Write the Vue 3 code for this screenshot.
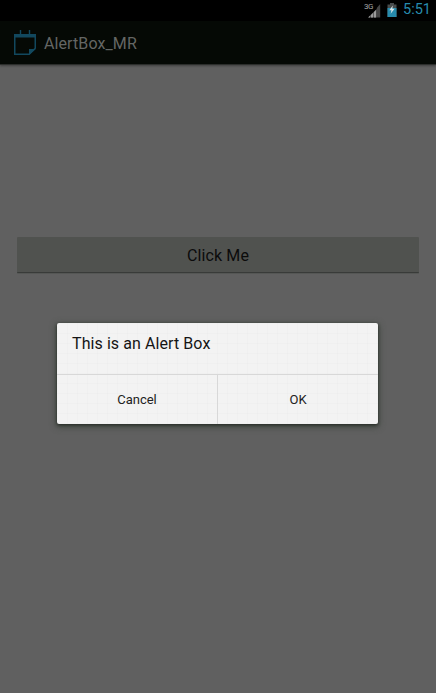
<script setup>
const actions = ['Cancel', 'OK']
</script>

<template>
  <div class="screen">
    <header class="status">
      <svg class="signal" width="17" height="16" viewBox="0 0 17 16">
        <text x="0" y="7" class="network">3G</text>
        <path d="M4 15.5 12.8 7v8.5z" fill="#5c5c5c" />
        <path d="M4.5 15.5h1.5v-1.8l-1.5 1.5zM7 15.5h2v-4.6l-2 2zM10 15.5h2V8l-2 2z" fill="#9a9a9a" />
        <path d="M12.8 15.5h3.4V2l-3.4 4z" fill="#454545" />
      </svg>
      <svg class="battery" width="10" height="14" viewBox="0 0 10 14">
        <path d="M3 0h4v1.5h2.5V14H.5V1.5H3z" fill="#484c4d" />
        <path d="M.5 5h9v9h-9z" fill="#278bad" />
        <path d="M5.8 2.5 2.3 7.3h2.2l-.9 3.5 4-5H5.3z" fill="#d8e5e8" />
      </svg>
      <span class="clock">5:51</span>
    </header>
    <div class="bar">
      <svg class="logo" width="22" height="26" viewBox="0 0 22 26">
        <path d="M6.5 0v5M15.5 0v5" stroke="#12485e" stroke-width="1.4" />
        <path d="M0 4h22v3.5H0z" fill="#12485e" />
        <path d="M.75 7v17.25h14.5l6-6V7" fill="none" stroke="#12485e" stroke-width="1.5" />
        <path d="M15 25v-6h6.8z" fill="#12485e" />
      </svg>
      <span class="title">AlertBox_MR</span>
    </div>
    <main class="content">
      <button class="main-button">Click Me</button>
      <section class="dialog" role="dialog">
        <p class="message">This is an Alert Box</p>
        <div class="actions">
          <button v-for="label in actions" :key="label" class="action">{{ label }}</button>
        </div>
      </section>
    </main>
  </div>
</template>

<style>
body {
  margin: 0;
  background: #5f5f5f;
}
</style>

<style scoped>
.screen {
  width: 436px;
  height: 693px;
  display: flex;
  flex-direction: column;
  overflow: hidden;
  background-color: #606060;
  font-family: Roboto, sans-serif;
}
button {
  font-family: inherit;
  border: 0;
  padding: 0;
  margin: 0;
}
.status {
  height: 21px;
  flex: none;
  box-sizing: border-box;
  padding: 0 6px 2px 0;
  display: flex;
  justify-content: flex-end;
  align-items: center;
  background: #000;
}
.signal {
  margin-right: 1px;
  overflow: visible;
}
.network {
  font-size: 8px;
  letter-spacing: -0.5px;
  fill: #a5a5a5;
}
.battery {
  margin: 0 6px 0 5px;
}
.clock {
  color: #278bad;
  font-size: 14.5px;
  line-height: 19px;
  width: 27px;
}
.bar {
  height: 44px;
  flex: none;
  box-sizing: border-box;
  padding-left: 14px;
  display: flex;
  align-items: center;
  background: #050905;
  border-bottom: 1px solid #2c2e2c;
  box-shadow: 0 1px 2px rgba(0, 0, 0, 0.35);
}
.title {
  margin: 2px 0 0 8px;
  color: #646664;
  font-size: 16px;
  letter-spacing: 0.1px;
  line-height: 20px;
}
.content {
  flex: 1;
  padding: 172px 17px 0;
  display: flex;
  flex-direction: column;
  align-items: center;
}
.main-button {
  width: 100%;
  height: 36px;
  flex: none;
  background: #50524f;
  border-radius: 1px;
  border-bottom: 1px solid #393b39;
  box-shadow: 0 1px 0 #555755;
  color: #0b0b0b;
  font-size: 16px;
  letter-spacing: 0.12px;
  padding: 2px 0 0;
}
.dialog {
  width: 321px;
  height: 101px;
  flex: none;
  margin: 50px 1px 0 0;
  display: flex;
  flex-direction: column;
  background-color: #f3f3f3;
  background-image:
    linear-gradient(rgba(0, 0, 0, 0.012) 1px, transparent 1px),
    linear-gradient(90deg, rgba(0, 0, 0, 0.012) 1px, transparent 1px);
  background-size: 10px 10px;
  border-radius: 2px;
  box-shadow: 0 1px 3px #272b27, 0 2px 6px 1px #3e473e;
}
.message {
  height: 51px;
  box-sizing: border-box;
  margin: 0;
  padding: 11px 15px 10px;
  color: #151515;
  font-size: 16px;
  letter-spacing: 0.08px;
  line-height: 20px;
}
.actions {
  flex: 1;
  display: grid;
  grid-template-columns: 160px 161px;
  border-top: 1px solid #d8d8d8;
}
.action {
  background: transparent;
  color: #222;
  font-size: 13px;
}
.action + .action {
  border-left: 1px solid #d8d8d8;
}
</style>
